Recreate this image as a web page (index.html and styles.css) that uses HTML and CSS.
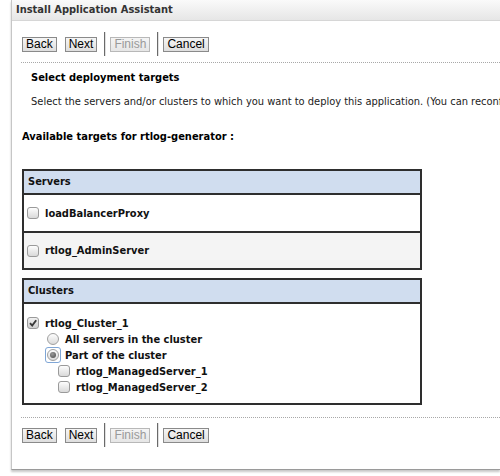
FILE: index.html
```html
<!DOCTYPE html>
<html>
<head>
<meta charset="utf-8">
<link rel="stylesheet" href="styles.css">
</head>
<body>
<div class="panel">
  <div class="title">Install Application Assistant</div>
  <div class="content">
    <div class="btnbar">
      <span class="btn">Back</span>
      <span class="btn">Next</span>
      <span class="sep"></span>
      <span class="btn disabled">Finish</span>
      <span class="sep"></span>
      <span class="btn">Cancel</span>
    </div>
    <div class="dots"></div>
    <div class="heading">Select deployment targets</div>
    <div class="desc">Select the servers and/or clusters to which you want to deploy this application. (You can reconfigure deployment targets later).</div>
    <div class="avail">Available targets for rtlog-generator :</div>

    <div class="tbl">
      <div class="thead">Servers</div>
      <div class="row">
        <span class="cb"></span><span class="name">loadBalancerProxy</span>
      </div>
      <div class="row alt">
        <span class="cb"></span><span class="name">rtlog_AdminServer</span>
      </div>
    </div>

    <div class="tbl clusters">
      <div class="thead">Clusters</div>
      <div class="cbody">
        <div class="line"><span class="cb checked"><svg viewBox="0 0 10 10" width="10" height="10"><path d="M2 5.2 L4.2 7.6 L8.2 2.2" fill="none" stroke="#3a3a3a" stroke-width="1.9"/></svg></span><span class="name">rtlog_Cluster_1</span></div>
        <div class="line lvl1"><span class="rb"></span><span class="name">All servers in the cluster</span></div>
        <div class="line lvl1"><span class="rbwrap"><span class="rb on"></span></span><span class="name">Part of the cluster</span></div>
        <div class="line lvl2"><span class="cb"></span><span class="name">rtlog_ManagedServer_1</span></div>
        <div class="line lvl2"><span class="cb"></span><span class="name">rtlog_ManagedServer_2</span></div>
      </div>
    </div>

    <div class="dots bottom"></div>
    <div class="btnbar bottombar">
      <span class="btn">Back</span>
      <span class="btn">Next</span>
      <span class="sep"></span>
      <span class="btn disabled">Finish</span>
      <span class="sep"></span>
      <span class="btn">Cancel</span>
    </div>
  </div>
</div>
</body>
</html>
```
FILE: styles.css
```css
html, body {
  margin: 0;
  padding: 0;
  background: #fff;
  overflow: hidden;
}
body {
  width: 500px;
  height: 476px;
  font-family: "DejaVu Sans Condensed", "DejaVu Sans", sans-serif;
  font-size: 11px;
  color: #000;
}
.panel {
  margin-left: 11px;
  width: 489px;
  height: 470px;
  box-sizing: border-box;
  border-left: 1px solid #c6c6c6;
  border-bottom: 1px solid #9a9a9a;
  box-shadow: 0 2px 2px #c8c8c8;
  overflow: hidden;
  white-space: nowrap;
}
.title {
  height: 21px;
  box-sizing: border-box;
  padding-left: 4px;
  line-height: 20px;
  font-weight: bold;
  color: #333;
  background: linear-gradient(#fafafa, #e6e6e6);
  border-bottom: 1px solid #d6d6d6;
}
.content {
  padding-left: 10px;
}
.btnbar {
  display: flex;
  align-items: center;
  height: 24px;
  margin-top: 11px;
}
.btnbar.bottombar {
  margin-top: 5px;
}
.btn {
  font-family: "Liberation Sans", Arial, sans-serif;
  font-size: 12px;
  height: 15px;
  line-height: 13px;
  box-sizing: border-box;
  padding: 0 3px;
  border: 1px solid #8a8a8a;
  background: linear-gradient(#f6f6f6, #dedede);
  color: #000;
  margin-right: 8px;
}
.btn.disabled {
  color: #9a9a9a;
  border-color: #b8b8b8;
  background: linear-gradient(#f4f4f4, #e6e6e6);
}
.sep {
  width: 2px;
  height: 24px;
  background: #6a6a6a;
  border-right: 1px solid #e0e0e0;
  box-sizing: border-box;
  margin: 0 4px 0 -1px;
}
.dots {
  margin-top: 6px;
  margin-left: -1px;
  border-top: 1px dotted #a8a8a8;
}
.dots.bottom {
  margin-top: 12px;
}
.heading {
  font-weight: bold;
  padding-left: 9px;
  margin-top: 8px;
  line-height: 13px;
}
.desc {
  padding-left: 9px;
  margin-top: 11px;
  line-height: 13px;
  color: #222;
}
.avail {
  font-weight: bold;
  margin-top: 22px;
  line-height: 13px;
}
.tbl {
  margin-top: 26px;
  width: 400px;
  box-sizing: border-box;
  border: 2px solid #2e2e2e;
}
.tbl.clusters {
  margin-top: 8px;
}
.thead {
  height: 24px;
  box-sizing: border-box;
  background: #d0ddef;
  border-bottom: 2px solid #2e2e2e;
  font-weight: bold;
  font-size: 11px;
  line-height: 22px;
  padding-left: 4px;
  color: #111;
}
.row {
  height: 38px;
  box-sizing: border-box;
  border-bottom: 2px solid #2e2e2e;
  display: flex;
  align-items: center;
  padding-left: 3px;
  background: #fff;
}
.row.alt {
  height: 35px;
  border-bottom: none;
  background: #f4f4f4;
}
.name {
  font-weight: bold;
  font-size: 11px;
  margin-left: 6px;
  color: #111;
}
.cb {
  width: 12px;
  height: 12px;
  box-sizing: border-box;
  border: 1px solid #9a9a9a;
  border-radius: 3px;
  background: linear-gradient(#fdfdfd, #d9d9d9);
  display: inline-flex;
  align-items: center;
  justify-content: center;
  flex: none;
}
.cb.checked {
  background: linear-gradient(#f0f0f0, #d0d0d0);
}
.cbody {
  padding: 11px 0 9px 3px;
  height: 99px;
  box-sizing: border-box;
}
.line {
  display: flex;
  align-items: center;
  height: 16px;
}
.lvl1 {
  padding-left: 20px;
}
.lvl2 {
  padding-left: 31px;
}
.rb {
  width: 12px;
  height: 12px;
  box-sizing: border-box;
  border: 1px solid #a0a0a0;
  border-radius: 50%;
  background: linear-gradient(#fdfdfd, #dadada);
  display: inline-block;
  flex: none;
  position: relative;
}
.rb.on::after {
  content: "";
  position: absolute;
  left: 2px;
  top: 2px;
  width: 6px;
  height: 6px;
  border-radius: 50%;
  background: radial-gradient(circle at 40% 35%, #9a9a9a, #4a4a4a);
}
.rbwrap {
  display: inline-flex;
  margin-left: -2px;
  margin-right: -2px;
  padding: 1px;
  border: 1px solid #7fa6d6;
  border-radius: 3px;
}
```
